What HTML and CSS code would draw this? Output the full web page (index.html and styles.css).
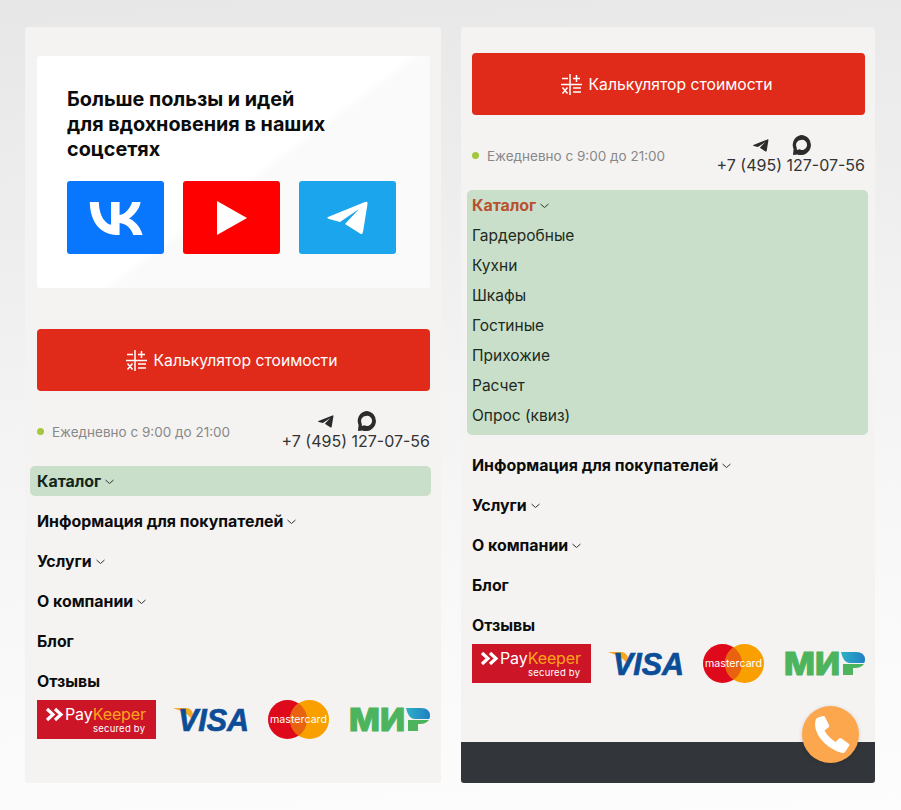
FILE: index.html
```html
<!DOCTYPE html>
<html lang="ru">
<head>
    <meta charset="UTF-8">
    <meta name="viewport" content="width=device-width, initial-scale=1.0">
    <title>Мобильное меню</title>
    <link rel="stylesheet" href="styles.css">
</head>
<body>
    <svg class="sprite" width="0" height="0" aria-hidden="true">
        <defs>
            <linearGradient id="mir-blue" x1="0" y1="0" x2="1" y2="0">
                <stop offset="0" stop-color="#2fb0c4"/>
                <stop offset="1" stop-color="#1f7fc4"/>
            </linearGradient>
        </defs>
        <symbol id="i-telegram" viewBox="0 0 42 34">
            <path d="M1 16 38 1Q41 0 40.500 3L36 31Q35.500 34 33 32.500L18 23 32 8 13 21 2 18Q-1 17 1 16Z"/>
        </symbol>
        <symbol id="i-chat" viewBox="0 0 20 20">
            <path fill-rule="evenodd" d="M10 0a10 10 0 1 1-3.500 19.400L2 20l.6-6A10 10 0 0 1 10 0Zm0 5a5 5 0 0 0-4.500 7l.5 3 2.500-.8A5 5 0 1 0 10 5Z"/>
        </symbol>
        <symbol id="i-calc" viewBox="0 0 21 21">
            <path fill="none" stroke="currentColor" stroke-width="1.500" d="M9 0v21M0 10.500h21M1 4.500h6M12 4.500h7M15.500 1v7M1.500 13.500l5 6M6.500 13.500l-5 6M12 14h8M12 18h8"/>
        </symbol>
        <symbol id="i-chevron" viewBox="0 0 9 6">
            <path fill="none" stroke="currentColor" stroke-width="1" d="M.5 1l4 3.500 4-3.500"/>
        </symbol>
        <symbol id="i-phone" viewBox="0 0 38 38">
            <path d="M4 3Q4.500 2 6 1.500L11 0Q12.500-.2 13 1L17 9Q17.500 10.500 16.500 11.500L12.500 14.500Q16 21 23.500 26L27 22.500Q28 21.500 29.500 22.500L36.500 27.500Q38 28.500 37 30L33 36Q32 37.500 30 37 16 33 8 22 1 12 4 3Z"/>
        </symbol>
    </svg>

    <div class="screens">
        <section class="panel panel-left">
            <div class="social-card">
                <h2>Больше пользы и идей<br>для вдохновения в наших<br>соцсетях</h2>
                <div class="social-links">
                    <a class="social-tile tile-vk" href="#">
                        <svg width="58" height="58" viewBox="0 0 24 24"><path fill="#fff" d="M13.070 19C5.600 19 1.330 13.870 1.150 5.330H4.890C5.010 11.600 7.770 14.250 9.960 14.800V5.330H13.480V10.730C15.630 10.500 17.900 8.040 18.660 5.330H22.180C21.590 8.670 19.130 11.130 17.380 12.140 19.130 12.960 21.940 15.110 23 19H19.130C18.300 16.400 16.220 14.400 13.480 14.120V19Z"/></svg>
                    </a>
                    <a class="social-tile tile-yt" href="#">
                        <svg width="30" height="34" viewBox="0 0 30 34"><path fill="#fff" d="M0 0 30 17 0 34Z"/></svg>
                    </a>
                    <a class="social-tile tile-tg" href="#">
                        <svg class="tile-tg-icon" width="42" height="34"><use href="#i-telegram"/></svg>
                    </a>
                </div>
            </div>

            <a class="calc-btn" href="#"><svg class="calc-icon"><use href="#i-calc"/></svg>Калькулятор стоимости</a>

            <div class="contacts">
                <div class="hours"><span class="hours-dot"></span>Ежедневно с 9:00 до 21:00</div>
                <div class="phone-box">
                    <div class="messengers">
                        <svg class="msg-tg"><use href="#i-telegram"/></svg>
                        <svg class="msg-chat"><use href="#i-chat"/></svg>
                    </div>
                    <a class="phone" href="#">+7 (495) 127-07-56</a>
                </div>
            </div>

            <nav class="menu">
                <div class="menu-item catalog-closed">Каталог<svg class="chevron"><use href="#i-chevron"/></svg></div>
                <div class="menu-item">Информация для покупателей<svg class="chevron"><use href="#i-chevron"/></svg></div>
                <div class="menu-item">Услуги<svg class="chevron"><use href="#i-chevron"/></svg></div>
                <div class="menu-item">О компании<svg class="chevron"><use href="#i-chevron"/></svg></div>
                <div class="menu-item">Блог</div>
                <div class="menu-item">Отзывы</div>
            </nav>

            <div class="payments">
                <svg class="pay-paykeeper" viewBox="0 0 119 39">
                    <rect width="119" height="39" fill="#cd1528"/>
                    <path fill="none" stroke="#fff" stroke-width="3.200" d="M10 9l6 5.500-6 5.500M18 9l6 5.500-6 5.500"/>
                    <text class="pk-name" x="28" y="20" textLength="81">Pay<tspan fill="#ffa41c">Keeper</tspan></text>
                    <text class="pk-sub" x="56" y="31.500" textLength="52">secured by</text>
                </svg>
                <svg class="pay-visa" viewBox="0 -8 77 39">
                    <path fill="#f7a823" d="M0 0h14q5 1 6 6l2 10Q17 5 0 0Z"/>
                    <text class="visa-text" x="5" y="23" textLength="71" lengthAdjust="spacingAndGlyphs">VISA</text>
                </svg>
                <svg class="pay-mc" viewBox="0 0 61 39">
                    <circle cx="19.500" cy="19.500" r="19.500" fill="#de0a1c"/>
                    <circle cx="41.500" cy="19.500" r="19.500" fill="#f9a000"/>
                    <path fill="#e9620f" d="M30.500 3.300a19.500 19.500 0 0 1 0 32.400 19.500 19.500 0 0 1 0-32.400Z"/>
                    <text class="mc-text" x="2" y="23" textLength="57" lengthAdjust="spacingAndGlyphs">mastercard</text>
                </svg>
                <svg class="pay-mir" viewBox="0 -8 82 39">
                    <text class="mir-text" x="1" y="22.500" textLength="56" lengthAdjust="spacingAndGlyphs">МИ</text>
                    <path fill="#4db45e" d="M60 12H81Q78 16 72 16H70V23H60Z"/>
                    <path fill="url(#mir-blue)" d="M58 0H73Q82 0 82 8 82 10 81 11H66Q60 10 58 0Z"/>
                </svg>
            </div>
        </section>

        <section class="panel panel-right">
            <a class="calc-btn" href="#"><svg class="calc-icon"><use href="#i-calc"/></svg>Калькулятор стоимости</a>

            <div class="contacts">
                <div class="hours"><span class="hours-dot"></span>Ежедневно с 9:00 до 21:00</div>
                <div class="phone-box">
                    <div class="messengers">
                        <svg class="msg-tg"><use href="#i-telegram"/></svg>
                        <svg class="msg-chat"><use href="#i-chat"/></svg>
                    </div>
                    <a class="phone" href="#">+7 (495) 127-07-56</a>
                </div>
            </div>

            <nav class="menu">
                <div class="catalog-open">
                    <div class="menu-item catalog-title">Каталог<svg class="chevron"><use href="#i-chevron"/></svg></div>
                    <a class="submenu-item" href="#">Гардеробные</a>
                    <a class="submenu-item" href="#">Кухни</a>
                    <a class="submenu-item" href="#">Шкафы</a>
                    <a class="submenu-item" href="#">Гостиные</a>
                    <a class="submenu-item" href="#">Прихожие</a>
                    <a class="submenu-item" href="#">Расчет</a>
                    <a class="submenu-item" href="#">Опрос (квиз)</a>
                </div>
                <div class="menu-item">Информация для покупателей<svg class="chevron"><use href="#i-chevron"/></svg></div>
                <div class="menu-item">Услуги<svg class="chevron"><use href="#i-chevron"/></svg></div>
                <div class="menu-item">О компании<svg class="chevron"><use href="#i-chevron"/></svg></div>
                <div class="menu-item">Блог</div>
                <div class="menu-item">Отзывы</div>
            </nav>

            <div class="payments">
                <svg class="pay-paykeeper" viewBox="0 0 119 39">
                    <rect width="119" height="39" fill="#cd1528"/>
                    <path fill="none" stroke="#fff" stroke-width="3.200" d="M10 9l6 5.500-6 5.500M18 9l6 5.500-6 5.500"/>
                    <text class="pk-name" x="28" y="20" textLength="81">Pay<tspan fill="#ffa41c">Keeper</tspan></text>
                    <text class="pk-sub" x="56" y="31.500" textLength="52">secured by</text>
                </svg>
                <svg class="pay-visa" viewBox="0 -8 77 39">
                    <path fill="#f7a823" d="M0 0h14q5 1 6 6l2 10Q17 5 0 0Z"/>
                    <text class="visa-text" x="5" y="23" textLength="71" lengthAdjust="spacingAndGlyphs">VISA</text>
                </svg>
                <svg class="pay-mc" viewBox="0 0 61 39">
                    <circle cx="19.500" cy="19.500" r="19.500" fill="#de0a1c"/>
                    <circle cx="41.500" cy="19.500" r="19.500" fill="#f9a000"/>
                    <path fill="#e9620f" d="M30.500 3.300a19.500 19.500 0 0 1 0 32.400 19.500 19.500 0 0 1 0-32.400Z"/>
                    <text class="mc-text" x="2" y="23" textLength="57" lengthAdjust="spacingAndGlyphs">mastercard</text>
                </svg>
                <svg class="pay-mir" viewBox="0 -8 82 39">
                    <text class="mir-text" x="1" y="22.500" textLength="56" lengthAdjust="spacingAndGlyphs">МИ</text>
                    <path fill="#4db45e" d="M60 12H81Q78 16 72 16H70V23H60Z"/>
                    <path fill="url(#mir-blue)" d="M58 0H73Q82 0 82 8 82 10 81 11H66Q60 10 58 0Z"/>
                </svg>
            </div>

            <div class="panel-footer"></div>
            <a class="call-btn" href="#"><svg class="call-icon"><use href="#i-phone"/></svg></a>
        </section>
    </div>
</body>
</html>
```

FILE: styles.css
```css
* {
    margin: 0;
    padding: 0;
    box-sizing: border-box;
}

body {
    width: 901px;
    height: 810px;
    overflow: hidden;
    font-family: Inter, "Noto Sans", sans-serif;
    color: #111;
    background: linear-gradient(175deg, #e7e7e7 0%, #f6f6f6 60%, #fdfdfd 100%);
}

a {
    color: inherit;
    text-decoration: none;
}

.sprite {
    position: absolute;
}

.screens {
    display: flex;
    gap: 20px;
    padding: 27px 0 0 25px;
}

.panel {
    position: relative;
    display: flex;
    flex-direction: column;
    height: 756px;
    background: #f4f3f2;
    border-radius: 3px;
}

.panel-left {
    width: 416px;
    padding: 29px 11px 0 12px;
}

.panel-right {
    width: 414px;
    padding: 26px 10px 0 11px;
}

.social-card {
    height: 232px;
    margin-bottom: 41px;
    padding: 31px 30px 0;
    background: linear-gradient(143deg, #fff 53%, #fafafb 55%);
    border-radius: 3px;
}

.social-card h2 {
    font-size: 19.800px;
    font-weight: 700;
    line-height: 25px;
    color: #0c0c0c;
}

.social-links {
    display: flex;
    gap: 19px;
    margin-top: 19px;
}

.social-tile {
    display: flex;
    align-items: center;
    justify-content: center;
    width: 97px;
    height: 73px;
    border-radius: 3px;
}

.tile-vk { background: #0977fd; }
.tile-yt { background: #fe0000; }
.tile-tg { background: #1ba5ec; }

.tile-tg-icon {
    fill: #fff;
}

.calc-btn {
    display: flex;
    align-items: center;
    justify-content: center;
    flex-shrink: 0;
    height: 62px;
    padding-right: 4px;
    background: #e02b1b;
    border-radius: 4px;
    color: #fff;
    font-size: 15.700px;
}

.calc-icon {
    width: 21px;
    height: 21px;
    margin-right: 7px;
}

.contacts {
    display: flex;
    align-items: center;
    justify-content: space-between;
    height: 41px;
    margin: 20px 0 14px;
}

.hours {
    display: flex;
    align-items: center;
    color: #888;
    font-size: 13.500px;
}

.hours-dot {
    width: 7px;
    height: 7px;
    margin-right: 8px;
    background: #a3c83c;
    border-radius: 50%;
}

.phone-box {
    display: flex;
    flex-direction: column;
    align-items: flex-end;
}

.messengers {
    display: flex;
    align-items: center;
    justify-content: center;
    align-self: stretch;
    gap: 22px;
    height: 20px;
    padding-right: 17px;
    fill: #2b2b2b;
}

.msg-tg {
    width: 16px;
    height: 13px;
}

.msg-chat {
    width: 20px;
    height: 20px;
}

.phone {
    font-size: 16px;
    line-height: 21px;
    color: #333;
}

.menu-item {
    display: flex;
    align-items: center;
    height: 30px;
    margin-bottom: 10px;
    font-size: 15.900px;
    font-weight: 700;
    color: #0c0c0c;
}

.chevron {
    width: 9px;
    height: 6px;
    margin: 1px 0 0 4px;
    color: #333;
}

.catalog-closed {
    margin-left: -7px;
    margin-right: -1px;
    padding-left: 7px;
    background: #c9dfc9;
    border-radius: 5px;
    color: #12261a;
}

.catalog-open {
    margin: 0 -3px 15px -5px;
    padding: 0 0 5px 5px;
    background: #c9dfc9;
    border-radius: 5px;
}

.catalog-title {
    margin-bottom: 0;
    color: #b8512f;
}

.submenu-item {
    display: flex;
    align-items: center;
    height: 30px;
    font-size: 15.500px;
    color: #1d2a22;
}

.payments {
    display: flex;
    align-items: center;
    height: 39px;
    margin-top: -6px;
}

.pay-paykeeper {
    width: 119px;
    height: 39px;
    margin-right: 17px;
}

.pay-visa {
    width: 77px;
    height: 39px;
    margin-right: 18px;
}

.pay-mc {
    width: 61px;
    height: 39px;
    margin-right: 19px;
}

.pay-mir {
    width: 82px;
    height: 39px;
}

.pk-name {
    font-size: 16px;
    fill: #fff;
}

.pk-sub {
    font-size: 9.500px;
    fill: #fff;
}

.visa-text {
    font-family: "Liberation Sans", sans-serif;
    font-size: 31px;
    font-weight: 700;
    font-style: italic;
    fill: #0c4d98;
    stroke: #0c4d98;
    stroke-width: 0.700px;
}

.mc-text {
    font-size: 10.500px;
    fill: #fff;
}

.mir-text {
    font-size: 31px;
    font-weight: 800;
    fill: #4db45e;
    stroke: #4db45e;
    stroke-width: 1px;
}

.panel-footer {
    height: 41px;
    margin: auto -10px 0 -11px;
    background: #32363b;
    border-radius: 0 0 3px 3px;
}

.call-btn {
    position: absolute;
    left: 341px;
    top: 679px;
    display: flex;
    align-items: center;
    justify-content: center;
    width: 57px;
    height: 57px;
    background: #fca64d;
    border-radius: 50%;
    box-shadow: 0 1px 4px rgba(0, 0, 0, 0.15);
}

.call-icon {
    width: 38px;
    height: 38px;
    fill: #fff;
}
```
